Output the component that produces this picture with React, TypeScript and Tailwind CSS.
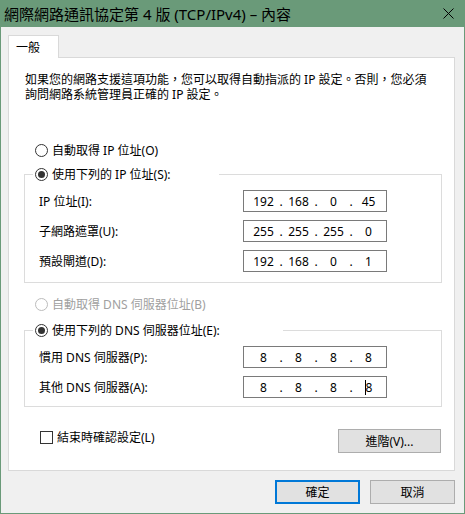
const ipRows = [
  { label: "IP 位址(I):", parts: ["192", "168", "0", "45"] },
  { label: "子網路遮罩(U):", parts: ["255", "255", "255", "0"] },
  { label: "預設閘道(D):", parts: ["192", "168", "0", "1"] },
];

const dnsRows = [
  { label: "慣用 DNS 伺服器(P):", parts: ["8", "8", "8", "8"], cursor: false },
  { label: "其他 DNS 伺服器(A):", parts: ["8", "8", "8", "8"], cursor: true },
];

const Radio = ({ checked, disabled }: { checked?: boolean; disabled?: boolean }) => (
  <span
    className={`shrink-0 w-[13px] h-[13px] rounded-full border bg-white flex items-center justify-center ${
      disabled ? "border-[#bcbcbc]" : "border-[#333333]"
    }`}
  >
    {checked && <span className="w-[7px] h-[7px] rounded-full bg-[#333333]" />}
  </span>
);

const IpBox = ({ parts, cursor }: { parts: string[]; cursor?: boolean }) => (
  <div className="w-[144px] h-[22px] border border-[#7a7a7a] bg-white flex items-center pl-[5px]">
    {parts.map((p, i) => (
      <div key={i} className="flex items-center">
        <span className="w-[29px] flex justify-center items-center">
          {cursor && i === 3 && <span className="w-px h-[15px] bg-black" />}
          {p}
        </span>
        {i < 3 && <span className="w-[6px] text-center">.</span>}
      </div>
    ))}
  </div>
);

const Row = ({ label, children }: { label: string; children: React.ReactNode }) => (
  <div className="flex items-center h-[22px]">
    <span className="w-[218px] pl-[14px]">{label}</span>
    {children}
  </div>
);

export default function App() {
  return (
    <div className="w-[465px] h-[514px] bg-[#f0f0f0] border-x border-b border-[#6a9a79] flex flex-col text-[12px] leading-[17px] text-black font-['Noto_Sans','Noto_Sans_CJK_TC',sans-serif]">
      <div className="h-[27px] shrink-0 bg-[#6a9a79] flex items-center justify-between pl-[3px] pr-[10px]">
        <span className="text-[15px] leading-[20px]">網際網路通訊協定第 4 版 (TCP/IPv4) – 內容</span>
        <svg width="11" height="11" viewBox="0 0 11 11">
          <path d="M0.5 0.5 L10.5 10.5 M10.5 0.5 L0.5 10.5" stroke="#000" strokeWidth="1" />
        </svg>
      </div>

      <div className="ml-[7px] mr-[9px] flex flex-col">
        <div className="relative z-10 mt-[8px] -mb-px w-[51px] h-[23px] bg-white border-x border-t border-[#d9d9d9] pl-[7px] pt-[3px]">
          一般
        </div>

        <div className="h-[414px] bg-white border border-[#d9d9d9] flex flex-col">
          <div className="pl-[16px] pt-[14px] leading-[15px]">
            <div className="h-[15px]">如果您的網路支援這項功能，您可以取得自動指派的 IP 設定。否則，您必須</div>
            <div className="h-[15px]">詢問網路系統管理員正確的 IP 設定。</div>
          </div>

          <label className="mt-[40px] ml-[26px] h-[17px] flex items-center gap-[4px]">
            <Radio />
            自動取得 IP 位址(O)
          </label>

          <fieldset className="mt-[7px] ml-[15px] mr-[12px] border border-[#dcdcdc] pt-[7px] pb-[10px]">
            <legend className="ml-[8px] w-[186px] pl-[2px] h-[17px] flex items-center gap-[4px]">
              <Radio checked />
              使用下列的 IP 位址(S):
            </legend>
            <div className="flex flex-col gap-[8px]">
              {ipRows.map((r, i) => (
                <Row key={i} label={r.label}>
                  <IpBox parts={r.parts} />
                </Row>
              ))}
            </div>
          </fieldset>

          <label className="mt-[13px] ml-[26px] h-[17px] flex items-center gap-[4px] text-[#a0a0a0]">
            <Radio disabled />
            自動取得 DNS 伺服器位址(B)
          </label>

          <fieldset className="mt-[9px] ml-[15px] mr-[12px] border border-[#dcdcdc] pt-[7px] pb-[8px]">
            <legend className="ml-[8px] w-[250px] pl-[2px] h-[17px] flex items-center gap-[4px]">
              <Radio checked />
              使用下列的 DNS 伺服器位址(E):
            </legend>
            <div className="flex flex-col gap-[8px]">
              {dnsRows.map((r, i) => (
                <Row key={i} label={r.label}>
                  <IpBox parts={r.parts} cursor={r.cursor} />
                </Row>
              ))}
            </div>
          </fieldset>

          <div className="mt-[22px] flex justify-between items-start pl-[31px] pr-[13px]">
            <label className="h-[17px] flex items-center gap-[4px]">
              <span className="w-[13px] h-[13px] border border-[#333333] bg-white" />
              結束時確認設定(L)
            </label>
            <button className="w-[103px] h-[24px] bg-[#e1e1e1] border border-[#adadad]">進階(V)...</button>
          </div>
        </div>

        <div className="mt-[9px] flex justify-end gap-[10px]">
          <button className="w-[85px] h-[24px] bg-[#e1e1e1] border-2 border-[#0078d7]">確定</button>
          <button className="w-[85px] h-[24px] bg-[#e1e1e1] border border-[#adadad]">取消</button>
        </div>
      </div>
    </div>
  );
}
